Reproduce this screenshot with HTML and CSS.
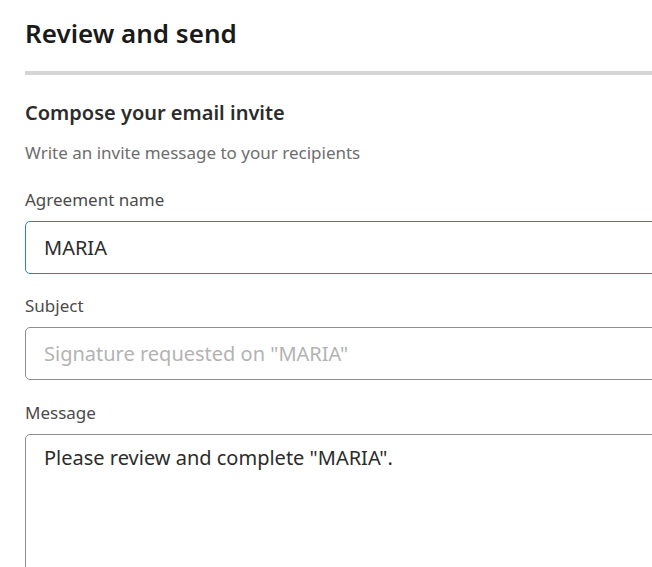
FILE: index.html
```html
<!DOCTYPE html>
<html lang="en">
<head>
<meta charset="utf-8">
<title>Review and send</title>
<link rel="stylesheet" href="styles.css">
</head>
<body>
<main class="page">
  <h1 class="title">Review and send</h1>
  <hr class="divider">
  <section class="compose">
    <h2 class="section-title">Compose your email invite</h2>
    <p class="hint">Write an invite message to your recipients</p>
    <div class="field field-first">
      <label class="label" for="agreement">Agreement name</label>
      <input class="input input-active" id="agreement" type="text" value="MARIA">
    </div>
    <div class="field">
      <label class="label" for="subject">Subject</label>
      <input class="input" id="subject" type="text" placeholder="Signature requested on &quot;MARIA&quot;">
    </div>
    <div class="field field-last">
      <label class="label" for="message">Message</label>
      <textarea class="input textarea" id="message">Please review and complete "MARIA".</textarea>
    </div>
  </section>
</main>
</body>
</html>
```

FILE: styles.css
```css
html, body {
  margin: 0;
  padding: 0;
  background: #ffffff;
  overflow: hidden;
}
body {
  font-family: "Noto Sans", "Open Sans", sans-serif;
  color: #2c2c2c;
}
.page {
  padding: 14px 0 0 25px;
  width: 680px;
}
.title {
  margin: 0;
  font-size: 26px;
  font-weight: 600;
  line-height: 38px;
  color: #1a1a1a;
}
.divider {
  margin: 19px 0 0 0;
  border: 0;
  height: 4px;
  background: #d5d5d5;
}
.compose {
  padding-top: 25px;
}
.section-title {
  margin: 0;
  font-size: 20px;
  font-weight: 600;
  line-height: 26px;
  color: #2c2c2c;
}
.hint {
  margin: 16px 0 0 0;
  font-size: 17px;
  line-height: 22px;
  color: #6e6e6e;
}
.field {
  display: flex;
  flex-direction: column;
  margin-top: 21px;
}
.field-first {
  margin-top: 25px;
}
.field-last {
  margin-top: 22px;
}
.label {
  font-size: 17px;
  line-height: 22px;
  color: #4b4b4b;
  margin-bottom: 10px;
}
.input {
  box-sizing: border-box;
  height: 53px;
  width: 100%;
  border: 1px solid #8e8e8e;
  border-radius: 5px;
  padding: 0 18px;
  font-family: "Noto Sans", "Open Sans", sans-serif;
  font-size: 20px;
  color: #2c2c2c;
  background: #ffffff;
  outline: none;
}
.input::placeholder {
  color: #b3b3b3;
}
.input-active {
  border: 1px solid #2d7fc9;
}
.textarea {
  height: 160px;
  padding: 10px 18px;
  resize: none;
  line-height: 26px;
}
```
